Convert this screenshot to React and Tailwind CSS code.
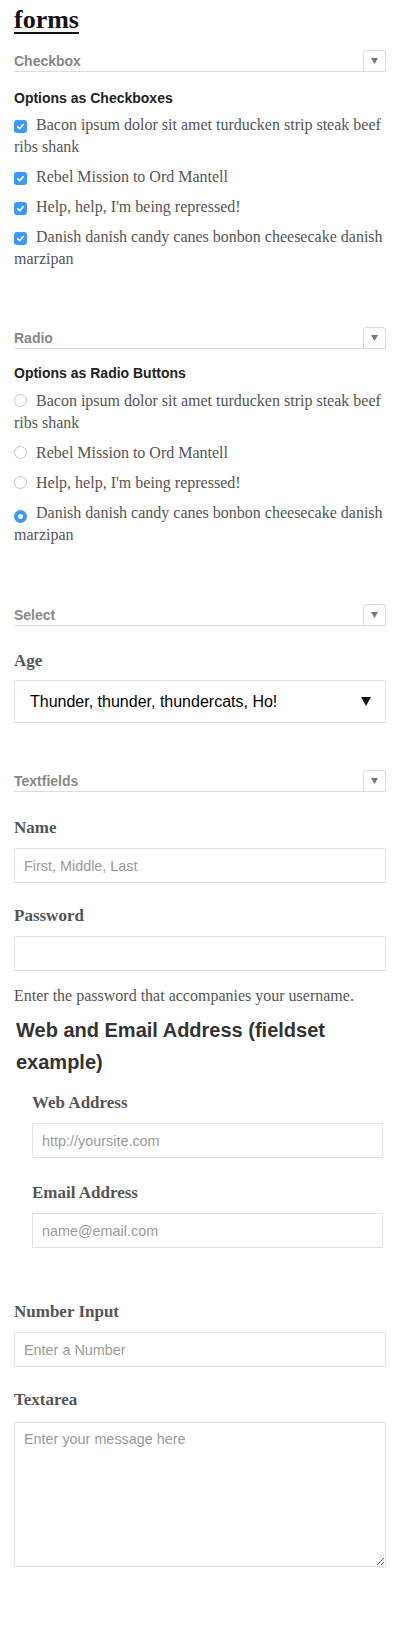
import React from "react";

const serif = "font-['Liberation_Serif',serif]";
const sans = "font-['Liberation_Sans',Arial,sans-serif]";

const options = [
  "Bacon ipsum dolor sit amet turducken strip steak beef ribs shank",
  "Rebel Mission to Ord Mantell",
  "Help, help, I'm being repressed!",
  "Danish danish candy canes bonbon cheesecake danish marzipan",
];

const SectionHeader = ({ title }) => (
  <div className="flex h-[22px] items-stretch justify-between border-b border-[#dcdcdc]">
    <h2 className={`${sans} self-center text-[14px] font-bold leading-[16px] text-[#888]`}>{title}</h2>
    <button className="flex w-[23px] items-center justify-center rounded-t-[4px] border border-b-0 border-[#dcdcdc] bg-white">
      <svg width="7" height="6" viewBox="0 0 7 6">
        <polygon points="0,0 7,0 3.5,6" fill="#777" />
      </svg>
    </button>
  </div>
);

const CheckMark = () => (
  <span className="mr-[9px] inline-flex h-[13px] w-[13px] items-center justify-center rounded-[3px] bg-[#3b99fc] align-[-1px]">
    <svg width="9" height="9" viewBox="0 0 9 9">
      <path d="M1.8 4.8 L3.7 6.6 L7.2 2.6" fill="none" stroke="white" strokeWidth="1.6" strokeLinecap="round" strokeLinejoin="round" />
    </svg>
  </span>
);

const RadioMark = ({ on }) =>
  on ? (
    <span className="mr-[9px] inline-flex h-[13px] w-[13px] items-center justify-center rounded-full bg-[#3b99fc] align-[-1px]">
      <span className="h-[5px] w-[5px] rounded-full bg-white" />
    </span>
  ) : (
    <span className="mr-[9px] inline-block h-[13px] w-[13px] rounded-full border border-[#c4c4c4] bg-white align-[-1px]" />
  );

const Label = ({ children, className = "" }) => (
  <label className={`${serif} block text-[17px] font-bold leading-[24px] text-[#555] ${className}`}>{children}</label>
);

const Input = ({ placeholder, type = "text" }) => (
  <input
    type={type}
    placeholder={placeholder}
    className={`${sans} mt-2 block h-[35px] w-full border border-[#e3e3e3] bg-white pl-[9px] text-[14.4px] text-[#333] placeholder:text-[#9a9a9a] focus:outline-none`}
  />
);

export default function App() {
  return (
    <div className={`${serif} bg-white px-[14px] pb-[66px] pt-[4px] text-[#555]`}>
      <h1 className="text-[26px] font-bold leading-[32px] text-[#111] underline decoration-[2px] underline-offset-[4px]">forms</h1>

      {/* checkbox */}
      <section className="mt-[14px]">
        <SectionHeader title="Checkbox" />
        <h3 className={`${sans} mt-[16px] text-[14px] font-bold leading-[20px] text-[#222]`}>Options as Checkboxes</h3>
        <ul className="mt-[6px]">
          {options.map((o, i) => (
            <li key={i} className={`text-[16px] leading-[22px] ${i > 0 ? "mt-2" : ""}`}>
              <CheckMark />
              {o}
            </li>
          ))}
        </ul>
      </section>

      {/* radio */}
      <section className="mt-[57px]">
        <SectionHeader title="Radio" />
        <h3 className={`${sans} mt-[14px] text-[14px] font-bold leading-[20px] text-[#222]`}>Options as Radio Buttons</h3>
        <ul className="mt-[7px]">
          {options.map((o, i) => (
            <li key={i} className={`text-[16px] leading-[22px] ${i > 0 ? "mt-2" : ""}`}>
              <RadioMark on={i === 3} />
              {o}
            </li>
          ))}
        </ul>
      </section>

      {/* select */}
      <section className="mt-[58px]">
        <SectionHeader title="Select" />
        <Label className="mt-[23px]">Age</Label>
        <div className={`${sans} mt-[7px] flex h-[43px] items-center justify-between border border-[#e3e3e3] bg-white pl-[15px] pr-[14px] text-[16px] text-black`}>
          <span>Thunder, thunder, thundercats, Ho!</span>
          <svg width="10" height="9" viewBox="0 0 10 9">
            <polygon points="0,0 10,0 5,9" fill="#111" />
          </svg>
        </div>
      </section>

      {/* textfields */}
      <section className="mt-[47px]">
        <SectionHeader title="Textfields" />
        <Label className="mt-[24px]">Name</Label>
        <Input placeholder="First, Middle, Last" />
        <Label className="mt-[21px]">Password</Label>
        <Input type="password" />
        <p className="mt-[14px] text-[16px] leading-[22px] text-[#555]">Enter the password that accompanies your username.</p>

        <fieldset className="mt-[7px] pl-[18px] pr-[3px]">
          <legend className={`${sans} -ml-[16px] text-[20px] font-bold leading-[32px] text-[#333]`}>Web and Email Address (fieldset example)</legend>
          <Label className="mt-[13px]">Web Address</Label>
          <Input placeholder="http://yoursite.com" />
          <Label className="mt-[23px]">Email Address</Label>
          <Input placeholder="name@email.com" />
        </fieldset>

        <Label className="mt-[52px]">Number Input</Label>
        <Input type="number" placeholder="Enter a Number" />
        <Label className="mt-[21px]">Textarea</Label>
        <textarea
          placeholder="Enter your message here"
          className={`${sans} mt-[10px] block h-[145px] w-full border border-[#e3e3e3] bg-white px-[9px] py-[6px] text-[14.4px] text-[#333] placeholder:text-[#9a9a9a] focus:outline-none`}
        />
      </section>
    </div>
  );
}
